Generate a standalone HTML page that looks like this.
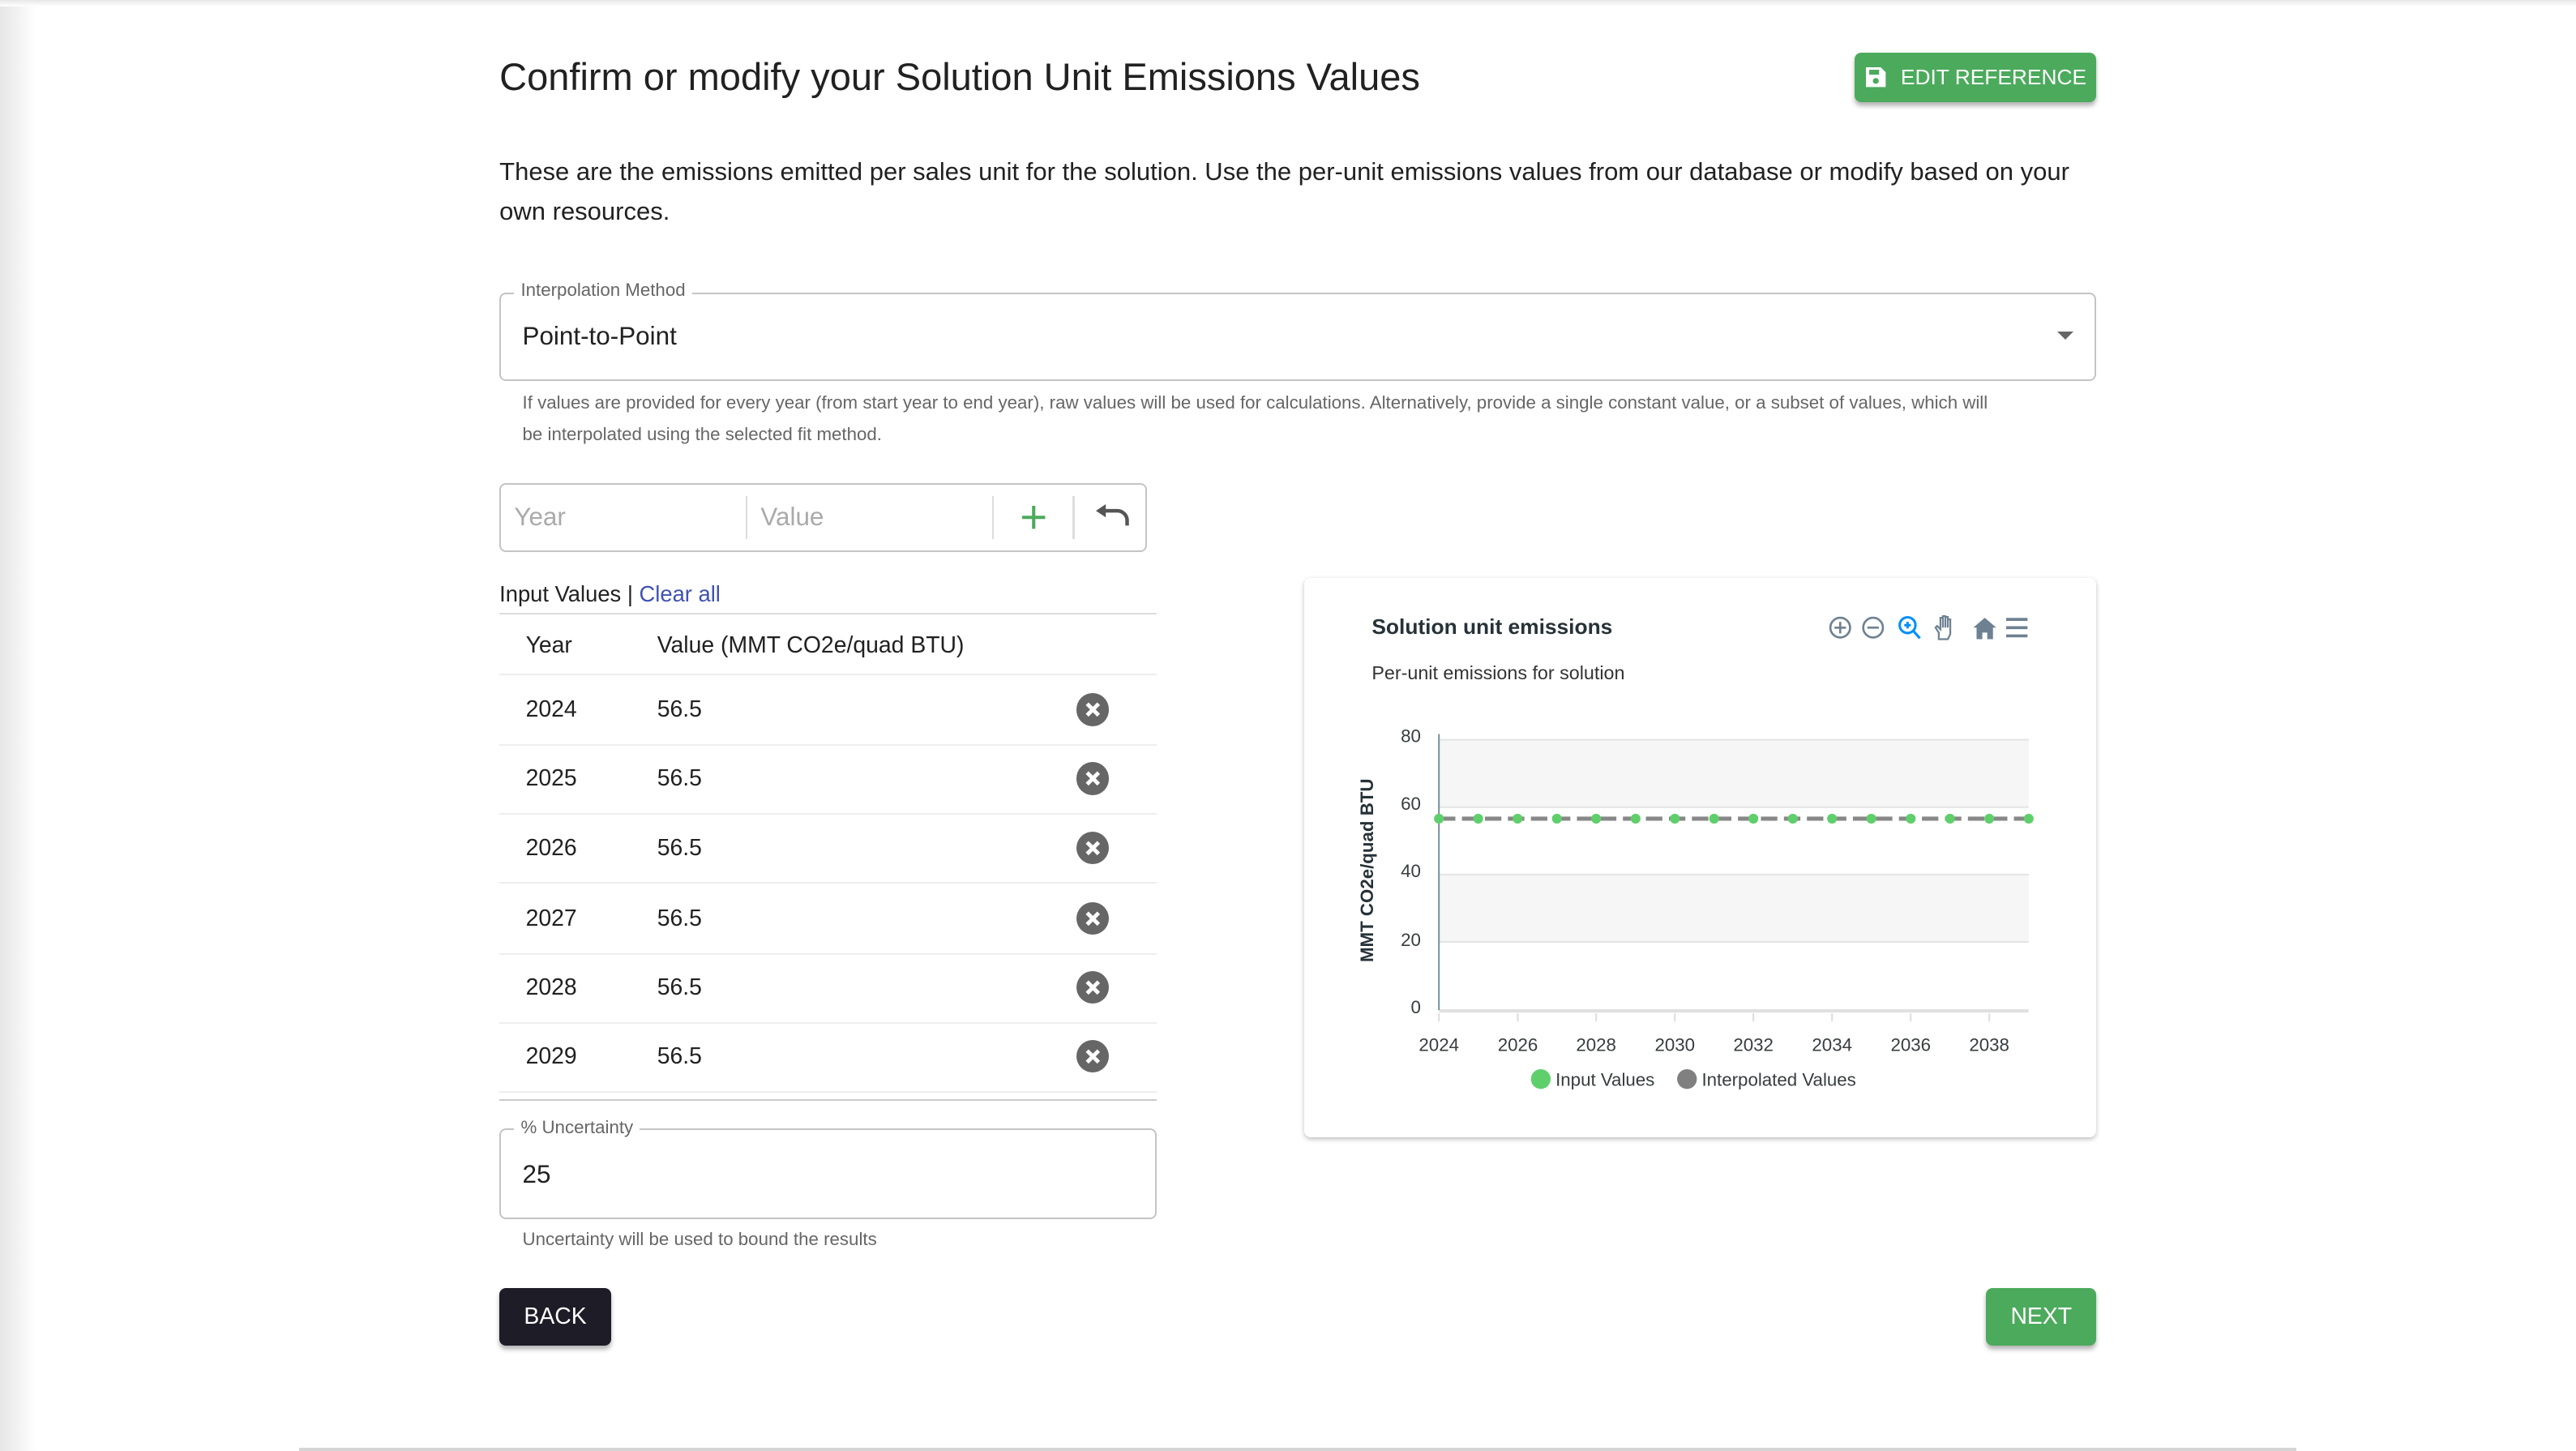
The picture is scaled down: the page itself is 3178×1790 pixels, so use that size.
<!DOCTYPE html>
<html><head><meta charset="utf-8">
<style>
html,body{margin:0;padding:0;background:#fff;overflow:hidden}
body{width:3178px;height:1790px}
#w{zoom:2.02679;width:1568px;height:883px;position:relative;font-family:"Liberation Sans",sans-serif;color:#212121;background:#fff}
.a{position:absolute;white-space:nowrap}
.btn{position:absolute;border-radius:4px;color:#fff;font-size:14px;display:flex;align-items:center;justify-content:center;box-shadow:0 2px 3px rgba(0,0,0,.3)}
.row{position:absolute;left:304px;width:400px;height:42px;border-bottom:1px solid #eee;font-size:14px}
.row span{position:absolute;top:13px}
.x{position:absolute;left:351px;top:11px;width:20px;height:20px;border-radius:50%;background:#666}
</style></head><body><div id="w">
<div class="a" style="left:0;top:0;width:22px;height:883px;background:linear-gradient(90deg,#e6e6e6,#fafafa 80%,#fff)"></div>
<div class="a" style="left:0;top:0;width:1568px;height:4px;background:linear-gradient(#e8e8e8,#fff)"></div>

<div class="a" style="left:304px;top:33px;font-size:23.2px;color:#212121">Confirm or modify your Solution Unit Emissions Values</div>
<div class="btn" style="left:1129px;top:32px;width:147px;height:30px;background:#4caa5c;font-size:13px">
<svg width="14" height="14" viewBox="0 0 14 14" style="margin-right:8px"><path d="M1 1h9l3 3v9H1z" fill="#fff"/><rect x="3" y="2.5" width="6" height="3" fill="#4caa5c"/><circle cx="7" cy="9.3" r="1.8" fill="#4caa5c"/></svg>EDIT REFERENCE</div>

<div class="a" style="left:304px;top:93px;font-size:15.3px;line-height:24px;white-space:normal;width:975px">These are the emissions emitted per sales unit for the solution. Use the per-unit emissions values from our database or modify based on your own resources.</div>

<div class="a" style="left:304px;top:178px;width:970px;height:52px;border:1px solid #c4c4c4;border-radius:4px"></div>
<div class="a" style="left:313px;top:170px;background:#fff;padding:0 4px;font-size:11px;color:#666">Interpolation Method</div>
<div class="a" style="left:318px;top:196px;font-size:15.5px">Point-to-Point</div>
<div class="a" style="left:1252px;top:202px;width:0;height:0;border-left:5px solid transparent;border-right:5px solid transparent;border-top:5px solid #666"></div>
<div class="a" style="left:318px;top:236px;font-size:11px;line-height:19px;color:#666;white-space:normal;width:960px">If values are provided for every year (from start year to end year), raw values will be used for calculations. Alternatively, provide a single constant value, or a subset of values, which will<br>be interpolated using the selected fit method.</div>

<div class="a" style="left:304px;top:294px;width:392px;height:40px;border:1px solid #c4c4c4;border-radius:4px"></div>
<div class="a" style="left:313px;top:306px;font-size:15.5px;color:#aaa">Year</div>
<div class="a" style="left:454px;top:302px;width:1px;height:26px;background:#ddd"></div>
<div class="a" style="left:463px;top:306px;font-size:15.5px;color:#aaa">Value</div>
<div class="a" style="left:604px;top:302px;width:1px;height:26px;background:#ddd"></div>
<div class="a" style="left:653px;top:302px;width:1px;height:26px;background:#ddd"></div>
<svg class="a" style="left:620px;top:306px" width="18" height="18" viewBox="0 0 18 18"><path d="M9 2v14M2 9h14" stroke="#4caa5c" stroke-width="2"/></svg>
<svg class="a" style="left:666px;top:306px" width="22" height="18" viewBox="0 0 22 18"><path d="M6 5h8a6 6 0 0 1 6 6v3" stroke="#555" stroke-width="2.2" fill="none"/><path d="M1 5l6-4v8z" fill="#555"/></svg>

<div class="a" style="left:304px;top:354px;font-size:13.5px">Input Values | <span style="color:#3f51b5">Clear all</span></div>
<div class="a" style="left:304px;top:373px;width:400px;height:1px;background:#ddd"></div>
<div class="row" style="top:374px;height:36px"><span style="left:16px;top:11px">Year</span><span style="left:96px;top:11px">Value (MMT CO2e/quad BTU)</span></div>
<div class="row" style="top:411px"><span style="left:16px">2024</span><span style="left:96px">56.5</span><div class="x"><svg width="20" height="20"><path d="M6.5 6.5l7 7M13.5 6.5l-7 7" stroke="#fff" stroke-width="2.4"/></svg></div></div>
<div class="row" style="top:453px"><span style="left:16px">2025</span><span style="left:96px">56.5</span><div class="x"><svg width="20" height="20"><path d="M6.5 6.5l7 7M13.5 6.5l-7 7" stroke="#fff" stroke-width="2.4"/></svg></div></div>
<div class="row" style="top:495px"><span style="left:16px">2026</span><span style="left:96px">56.5</span><div class="x"><svg width="20" height="20"><path d="M6.5 6.5l7 7M13.5 6.5l-7 7" stroke="#fff" stroke-width="2.4"/></svg></div></div>
<div class="row" style="top:538px"><span style="left:16px">2027</span><span style="left:96px">56.5</span><div class="x"><svg width="20" height="20"><path d="M6.5 6.5l7 7M13.5 6.5l-7 7" stroke="#fff" stroke-width="2.4"/></svg></div></div>
<div class="row" style="top:580px"><span style="left:16px">2028</span><span style="left:96px">56.5</span><div class="x"><svg width="20" height="20"><path d="M6.5 6.5l7 7M13.5 6.5l-7 7" stroke="#fff" stroke-width="2.4"/></svg></div></div>
<div class="row" style="top:622px"><span style="left:16px">2029</span><span style="left:96px">56.5</span><div class="x"><svg width="20" height="20"><path d="M6.5 6.5l7 7M13.5 6.5l-7 7" stroke="#fff" stroke-width="2.4"/></svg></div></div>
<div class="a" style="left:304px;top:669px;width:400px;height:1px;background:#ccc"></div>

<div class="a" style="left:304px;top:687px;width:398px;height:53px;border:1px solid #c4c4c4;border-radius:4px"></div>
<div class="a" style="left:313px;top:680px;background:#fff;padding:0 4px;font-size:11px;color:#666">% Uncertainty</div>
<div class="a" style="left:318px;top:706px;font-size:15.5px">25</div>
<div class="a" style="left:318px;top:748px;font-size:11px;color:#666">Uncertainty will be used to bound the results</div>

<div class="btn" style="left:304px;top:784px;width:68px;height:35px;background:#1d1c27;font-size:14px">BACK</div>
<div class="btn" style="left:1209px;top:784px;width:67px;height:35px;background:#4caa5c;font-size:14px">NEXT</div>
<div class="a" style="left:182px;top:881px;width:1216px;height:2px;background:#d6d6d6"></div>

<div class="a" style="left:794px;top:352px;width:482px;height:340px;border-radius:4px;box-shadow:0 1px 3px rgba(0,0,0,.25);background:#fff"></div>
<div class="a" style="left:835px;top:374px;font-size:13px;font-weight:bold;color:#263238">Solution unit emissions</div>
<div class="a" style="left:835px;top:403px;font-size:11.5px;color:#333">Per-unit emissions for solution</div>
<svg class="a" style="left:1110px;top:372px" width="130" height="20" viewBox="0 0 130 20">
<circle cx="10" cy="10" r="6" fill="none" stroke="#6e8192" stroke-width="1.3"/><path d="M6.5 10h7M10 6.5v7" stroke="#6e8192" stroke-width="1.3"/>
<circle cx="30" cy="10" r="6" fill="none" stroke="#6e8192" stroke-width="1.3"/><path d="M26.5 10h7" stroke="#6e8192" stroke-width="1.3"/>
<circle cx="51" cy="8.5" r="4.8" fill="none" stroke="#008ffb" stroke-width="1.5"/><path d="M54.5 12l4 4.5M49 8.5h4M51 6.5v4" stroke="#008ffb" stroke-width="1.5"/>
<path d="M70 17v-4l-2-3 1-1 2 2V4h1.5v6V3h1.5v7V3.5h1.5V10V5h1.5v9l-1.5 3z" fill="none" stroke="#6e8192" stroke-width="1.1"/>
<path d="M91 10l7-6 7 6h-2v7h-3.5v-4h-3v4H93v-7z" fill="#6e8192"/>
<path d="M111 5h13M111 10h13M111 15h13" stroke="#6e8192" stroke-width="1.8"/>
</svg>
<svg class="a" style="left:794px;top:352px;overflow:visible" width="482" height="340" viewBox="794 352 482 340">
<rect x="876" y="450" width="359" height="41.25" fill="#f6f6f6"/>
<rect x="876" y="532.5" width="359" height="41.25" fill="#f6f6f6"/>
<g stroke="#e4e4e4" stroke-width="1"><path d="M876 450.5h359M876 491.5h359M876 532.5h359M876 573.5h359"/></g>
<path d="M876 615.5h359" stroke="#e0e0e0" stroke-width="2"/>
<path d="M876 447v168" stroke="#78909c" stroke-width="1"/>
<g stroke="#ddd"><path d="M876 617v5M924 617v5M971.7 617v5M1019.6 617v5M1067.4 617v5M1115.3 617v5M1163.2 617v5M1211 617v5"/></g>
<path d="M876 498.5H1235" stroke="#888" stroke-width="2.5" stroke-dasharray="10 4"/>
<g fill="#5fcf6b">
<circle cx="876" cy="498.5" r="3"/><circle cx="899.9" cy="498.5" r="3"/><circle cx="923.9" cy="498.5" r="3"/><circle cx="947.8" cy="498.5" r="3"/><circle cx="971.7" cy="498.5" r="3"/><circle cx="995.7" cy="498.5" r="3"/><circle cx="1019.6" cy="498.5" r="3"/><circle cx="1043.5" cy="498.5" r="3"/><circle cx="1067.4" cy="498.5" r="3"/><circle cx="1091.4" cy="498.5" r="3"/><circle cx="1115.3" cy="498.5" r="3"/><circle cx="1139.2" cy="498.5" r="3"/><circle cx="1163.2" cy="498.5" r="3"/><circle cx="1187.1" cy="498.5" r="3"/><circle cx="1211" cy="498.5" r="3"/><circle cx="1235" cy="498.5" r="3"/></g>
<g font-family="Liberation Sans,sans-serif" font-size="11" fill="#373d3f" text-anchor="end">
<text x="865" y="452">80</text><text x="865" y="493">60</text><text x="865" y="534">40</text><text x="865" y="576">20</text><text x="865" y="617">0</text></g>
<g font-family="Liberation Sans,sans-serif" font-size="11" fill="#373d3f" text-anchor="middle">
<text x="876" y="640">2024</text><text x="924" y="640">2026</text><text x="971.7" y="640">2028</text><text x="1019.6" y="640">2030</text><text x="1067.4" y="640">2032</text><text x="1115.3" y="640">2034</text><text x="1163.2" y="640">2036</text><text x="1211" y="640">2038</text></g>
<text transform="translate(836 530) rotate(-90)" text-anchor="middle" font-family="Liberation Sans,sans-serif" font-size="11" font-weight="bold" fill="#263238">MMT CO2e/quad BTU</text>
<circle cx="938" cy="657" r="6" fill="#5fcf6b"/><text x="947" y="661" font-family="Liberation Sans,sans-serif" font-size="11" fill="#373d3f">Input Values</text>
<circle cx="1027" cy="657" r="6" fill="#808080"/><text x="1036" y="661" font-family="Liberation Sans,sans-serif" font-size="11" fill="#373d3f">Interpolated Values</text>
</svg>
</div></body></html>
